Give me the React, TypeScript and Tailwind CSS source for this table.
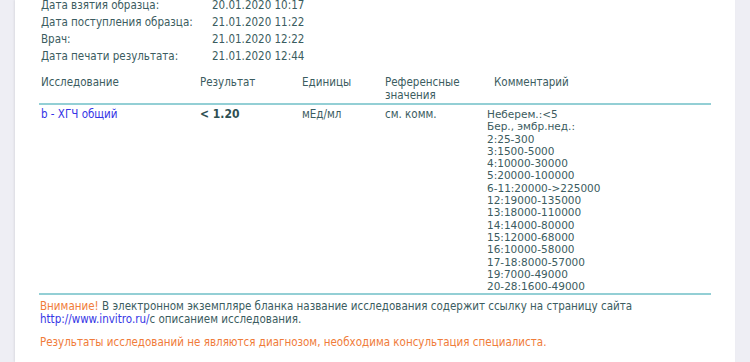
const info = [
  ['Дата взятия образца:', '20.01.2020 10:17'],
  ['Дата поступления образца:', '21.01.2020 11:22'],
  ['Врач:', '21.01.2020 12:22'],
  ['Дата печати результата:', '21.01.2020 12:44'],
];

const comments = [
  'Неберем.:<5',
  'Бер., эмбр.нед.:',
  '2:25-300',
  '3:1500-5000',
  '4:10000-30000',
  '5:20000-100000',
  '6-11:20000->225000',
  '12:19000-135000',
  '13:18000-110000',
  '14:14000-80000',
  '15:12000-68000',
  '16:10000-58000',
  '17-18:8000-57000',
  '19:7000-49000',
  '20-28:1600-49000',
];

export default function App() {
  return (
    <div className="flex h-[362px] w-[750px] overflow-hidden bg-[#eeeef4] font-['DejaVu_Sans_Condensed','DejaVu_Sans',sans-serif] text-[11.5px] text-[#3b5c60]">
      <div className="ml-[15px] w-[720px] shrink-0 bg-white shadow-[-1px_0_2px_rgba(0,0,0,0.08)]">
        <div className="ml-[24px] mr-[24px] mt-[-3px]">
          <div className="flex flex-col pl-[2px]">
            {info.map(([k, v]) => (
              <div key={k} className="flex h-[17px] items-center">
                <span className="w-[171px]">{k}</span>
                <span>{v}</span>
              </div>
            ))}
          </div>

          <div className="mt-[11px] flex h-[29px] border-b-2 border-[#93cfd5] pl-[2px] leading-[13px]">
            <span className="w-[159px]">Исследование</span>
            <span className="w-[102px]">Результат</span>
            <span className="w-[83px]">Единицы</span>
            <span className="w-[109px]">Референсные<br />значения</span>
            <span>Комментарий</span>
          </div>

          <div className="flex h-[190px] border-b-2 border-[#93cfd5] pl-[2px] pt-[3px]">
            <span className="w-[159px] leading-[12.3px] text-[#3535e6]">b - ХГЧ общий</span>
            <span className="w-[102px] text-[12px] font-bold leading-[12.3px] text-[#2e4f52]">&lt; 1.20</span>
            <span className="w-[83px] leading-[12.3px]">мЕд/мл</span>
            <span className="w-[102px] leading-[12.3px]">см. комм.</span>
            <div className="flex flex-col font-['DejaVu_Sans',sans-serif] text-[10.5px] leading-[12.3px]">
              {comments.map((c) => (
                <span key={c}>{c}</span>
              ))}
            </div>
          </div>

          <div className="mt-[5px] pl-[1px] leading-[12.5px]">
            <p>
              <span className="text-[#f07c3a]">Внимание!</span> В электронном экземпляре бланка название исследования содержит ссылку на страницу сайта
              <br />
              <span className="text-[#3535e6]">http://www.invitro.ru/</span>с описанием исследования.
            </p>
            <p className="mt-[11px] text-[#f07c3a]">Результаты исследований не являются диагнозом, необходима консультация специалиста.</p>
          </div>
        </div>
      </div>
    </div>
  );
}
